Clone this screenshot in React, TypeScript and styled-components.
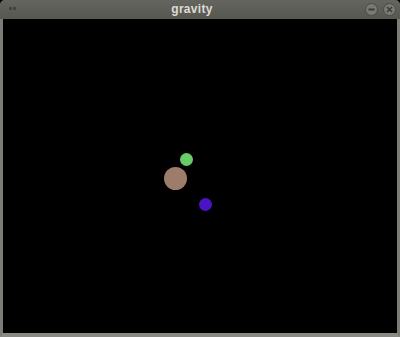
import React from 'react';
import styled, { createGlobalStyle } from 'styled-components';

const GlobalStyle = createGlobalStyle`
  html, body {
    margin: 0;
    padding: 0;
    background: #000;
    overflow: hidden;
  }
`;

const Window = styled.div`
  width: 400px;
  height: 337px;
  display: flex;
  flex-direction: column;
  background: #5b5b56;
  border-radius: 5px 5px 0 0;
  overflow: hidden;
`;

const TitleBar = styled.div`
  height: 19px;
  flex: none;
  display: grid;
  grid-template-columns: 59px 1fr 80px;
  align-items: center;
  background: linear-gradient(#65655f, #575752);
  padding: 0 4px 0 9px;
  box-sizing: border-box;
`;

const Grip = styled.div`
  display: flex;
  gap: 1px;
  margin-top: -2px;
`;

const GripDot = styled.span`
  width: 3px;
  height: 3px;
  background: #41413d;
  border-radius: 1px;
`;

const Title = styled.span`
  text-align: center;
  font-family: 'Liberation Sans', Arial, sans-serif;
  font-weight: bold;
  font-size: 12px;
  color: #dcdcd4;
  letter-spacing: 0.3px;
  margin-top: -1px;
`;

const Buttons = styled.div`
  display: flex;
  justify-content: flex-end;
  gap: 5px;
`;

const WinButton = styled.span`
  width: 11px;
  height: 11px;
  border-radius: 50%;
  background: #7a7a74;
  border: 1px solid #4a4a46;
  display: flex;
  align-items: center;
  justify-content: center;
`;

const Frame = styled.div`
  flex: 1;
  display: flex;
  border-left: 3px solid #7d7d78;
  border-right: 3px solid #7d7d78;
  border-bottom: 4px solid #8a8a85;
`;

const Canvas = styled.div`
  flex: 1;
  position: relative;
  background: #000;
`;

const Body = styled.span<{ $x: number; $y: number; $d: number; $c: string }>`
  position: absolute;
  left: ${(p) => p.$x - p.$d / 2}px;
  top: ${(p) => p.$y - p.$d / 2}px;
  width: ${(p) => p.$d}px;
  height: ${(p) => p.$d}px;
  border-radius: 50%;
  background: ${(p) => p.$c};
`;

const bodies = [
  { x: 183.5, y: 140.5, d: 13, c: '#69cc68' },
  { x: 172.5, y: 159, d: 23, c: '#9e7c6c' },
  { x: 202.5, y: 185.5, d: 13, c: '#4a14c6' },
];

export default function App() {
  return (
    <>
      <GlobalStyle />
      <Window>
        <TitleBar>
          <Grip>
            <GripDot />
            <GripDot />
          </Grip>
          <Title>gravity</Title>
          <Buttons>
            <WinButton>
              <svg width="7" height="7" viewBox="0 0 7 7">
                <rect x="0.5" y="2.5" width="6" height="2" fill="#3c3c38" />
              </svg>
            </WinButton>
            <WinButton>
              <svg width="7" height="7" viewBox="0 0 7 7">
                <path d="M1 1 L6 6 M6 1 L1 6" stroke="#3c3c38" strokeWidth="1.5" />
              </svg>
            </WinButton>
          </Buttons>
        </TitleBar>
        <Frame>
          <Canvas>
            {bodies.map((b, i) => (
              <Body key={i} $x={b.x} $y={b.y} $d={b.d} $c={b.c} />
            ))}
          </Canvas>
        </Frame>
      </Window>
    </>
  );
}
